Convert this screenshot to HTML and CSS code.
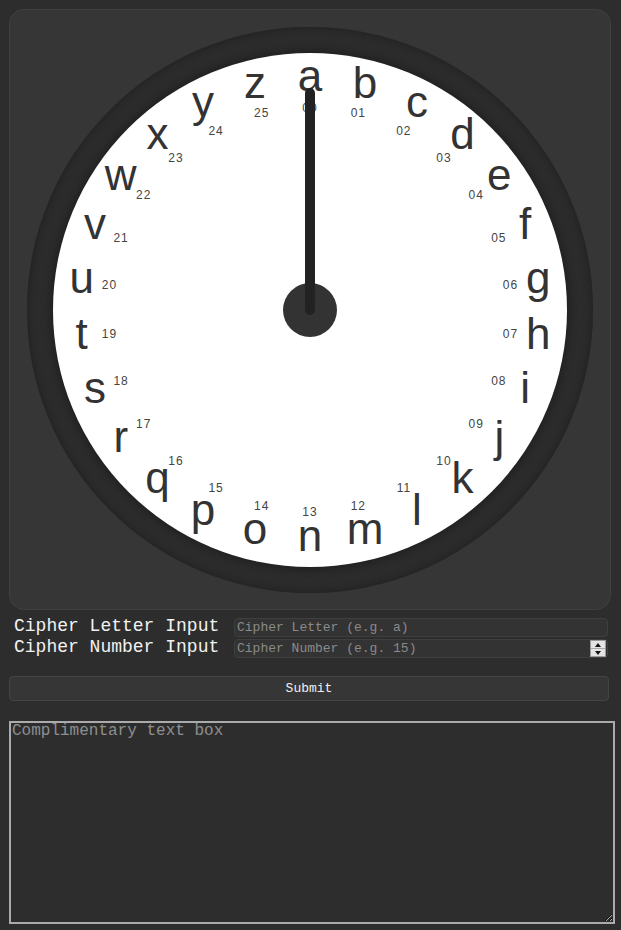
FILE: index.html
```
<!DOCTYPE html>
<html lang="en">
<head>
<meta charset="utf-8">
<title>Cipher Clock</title>
<link rel="stylesheet" href="styles.css">
</head>
<body>
<div class="card">
  <div class="clock">
    <div class="face">
      <span class="num" style="--i:0">00</span>
      <span class="num" style="--i:1">01</span>
      <span class="num" style="--i:2">02</span>
      <span class="num" style="--i:3">03</span>
      <span class="num" style="--i:4">04</span>
      <span class="num" style="--i:5">05</span>
      <span class="num" style="--i:6">06</span>
      <span class="num" style="--i:7">07</span>
      <span class="num" style="--i:8">08</span>
      <span class="num" style="--i:9">09</span>
      <span class="num" style="--i:10">10</span>
      <span class="num" style="--i:11">11</span>
      <span class="num" style="--i:12">12</span>
      <span class="num" style="--i:13">13</span>
      <span class="num" style="--i:14">14</span>
      <span class="num" style="--i:15">15</span>
      <span class="num" style="--i:16">16</span>
      <span class="num" style="--i:17">17</span>
      <span class="num" style="--i:18">18</span>
      <span class="num" style="--i:19">19</span>
      <span class="num" style="--i:20">20</span>
      <span class="num" style="--i:21">21</span>
      <span class="num" style="--i:22">22</span>
      <span class="num" style="--i:23">23</span>
      <span class="num" style="--i:24">24</span>
      <span class="num" style="--i:25">25</span>
      <span class="letter" style="--i:0">a</span>
      <span class="letter" style="--i:1">b</span>
      <span class="letter" style="--i:2">c</span>
      <span class="letter" style="--i:3">d</span>
      <span class="letter" style="--i:4">e</span>
      <span class="letter" style="--i:5">f</span>
      <span class="letter" style="--i:6">g</span>
      <span class="letter" style="--i:7">h</span>
      <span class="letter" style="--i:8">i</span>
      <span class="letter" style="--i:9">j</span>
      <span class="letter" style="--i:10">k</span>
      <span class="letter" style="--i:11">l</span>
      <span class="letter" style="--i:12">m</span>
      <span class="letter" style="--i:13">n</span>
      <span class="letter" style="--i:14">o</span>
      <span class="letter" style="--i:15">p</span>
      <span class="letter" style="--i:16">q</span>
      <span class="letter" style="--i:17">r</span>
      <span class="letter" style="--i:18">s</span>
      <span class="letter" style="--i:19">t</span>
      <span class="letter" style="--i:20">u</span>
      <span class="letter" style="--i:21">v</span>
      <span class="letter" style="--i:22">w</span>
      <span class="letter" style="--i:23">x</span>
      <span class="letter" style="--i:24">y</span>
      <span class="letter" style="--i:25">z</span>
      <div class="hub"></div>
      <div class="hand"></div>
    </div>
  </div>
</div>
<form class="controls">
  <div class="form-grid">
    <label class="label" for="letter">Cipher Letter Input</label>
    <div class="field"><input id="letter" type="text" placeholder="Cipher Letter (e.g. a)"></div>
    <label class="label" for="number">Cipher Number Input</label>
    <div class="field"><input id="number" type="text" placeholder="Cipher Number (e.g. 15)"><span class="spin"><span class="spin-btn"><span class="arrow-up"></span></span><span class="spin-btn"><span class="arrow-down"></span></span></span></div>
  </div>
  <button class="submit" type="button">Submit</button>
  <textarea class="notes" placeholder="Complimentary text box"></textarea>
</form>
</body>
</html>
```
FILE: styles.css
```
* { box-sizing: border-box; }
html, body { margin: 0; }
body {
  background: #2d2d2d;
  padding: 9px 10px 0 9px;
  font-family: "Liberation Mono", monospace;
}
.card {
  background: #363636;
  border: 1px solid #404040;
  border-radius: 15px;
  height: 601px;
  padding-top: 17px;
  display: flex;
  justify-content: center;
  align-items: flex-start;
}
.clock {
  width: 566px;
  height: 566px;
  border-radius: 50%;
  background: #2c2c2c;
  padding: 26px;
  box-shadow: inset 0 0 10px #1e1e1e;
}
.face {
  position: relative;
  width: 514px;
  height: 514px;
  border-radius: 50%;
  background: #ffffff;
  box-shadow: 0 0 10px 2px #1e1e1e;
}
.letter {
  position: absolute;
  left: 50%;
  top: 50%;
  font: 44px/26px "Liberation Sans", Arial, sans-serif;
  color: #333;
  white-space: nowrap;
  transform: translate(-50%, calc(-50% - 4px)) rotate(calc(var(--i) * 13.8461538deg)) translateY(-230px) rotate(calc(var(--i) * -13.8461538deg));
}
.num {
  position: absolute;
  left: 50%;
  top: 50%;
  font: 12px/1 "Liberation Sans", Arial, sans-serif;
  letter-spacing: 1px;
  color: #444;
  white-space: nowrap;
  transform: translate(-50%, calc(-50% - 0.5px)) rotate(calc(var(--i) * 13.8461538deg)) translateY(-202px) rotate(calc(var(--i) * -13.8461538deg));
}
.hub {
  position: absolute;
  left: 230px;
  top: 230px;
  width: 54px;
  height: 54px;
  border-radius: 50%;
  background: #333;
  z-index: 1;
}
.hand {
  position: absolute;
  left: 252px;
  top: 35px;
  width: 10px;
  height: 227px;
  border-radius: 5px;
  background: #222;
  z-index: 2;
}
.controls { margin: 0; }
.form-grid {
  display: grid;
  grid-template-columns: 220px 1fr;
  row-gap: 2px;
  margin: 8px 3px 0 5px;
}
.label {
  color: #f2f2f2;
  font-size: 18px;
  line-height: 16px;
  white-space: nowrap;
  align-self: start;
}
.field {
  display: flex;
  align-items: center;
  height: 19px;
  background: #333;
  border: 1px solid #3f3f3f;
  border-radius: 4px;
  padding: 0 1px 0 2px;
}
.field input {
  flex: 1;
  min-width: 0;
  height: 100%;
  background: transparent;
  border: 0;
  outline: 0;
  padding: 0;
  font: 13px "Liberation Mono", monospace;
  color: #ddd;
}
.field input::placeholder { color: #8a8a8a; }
.spin {
  display: flex;
  flex-direction: column;
  width: 16px;
  height: 17px;
  border: 1px solid #9a9a9a;
  background: #e4e4e4;
}
.spin-btn {
  flex: 1;
  display: flex;
  align-items: center;
  justify-content: center;
}
.spin-btn + .spin-btn { border-top: 1px solid #a8a8a8; }
.arrow-up {
  width: 0; height: 0;
  border-left: 3.5px solid transparent;
  border-right: 3.5px solid transparent;
  border-bottom: 4px solid #111;
}
.arrow-down {
  width: 0; height: 0;
  border-left: 3.5px solid transparent;
  border-right: 3.5px solid transparent;
  border-top: 4px solid #111;
}
.submit {
  display: block;
  width: 600px;
  height: 25px;
  margin: 18px 0 0;
  padding: 0;
  background: #363636;
  border: 1px solid #444;
  border-radius: 4px;
  color: #f0f0f0;
  font: 13px "Liberation Mono", monospace;
}
.notes {
  display: block;
  width: 606px;
  height: 203px;
  margin: 20px 0 0;
  background: #2d2d2d;
  border: 2px solid #ababab;
  padding: 0 1px;
  font: 16px/16px "Liberation Mono", monospace;
  color: #ccc;
  resize: both;
  outline: 0;
}
.notes::placeholder { color: #8f8f8f; }
```
